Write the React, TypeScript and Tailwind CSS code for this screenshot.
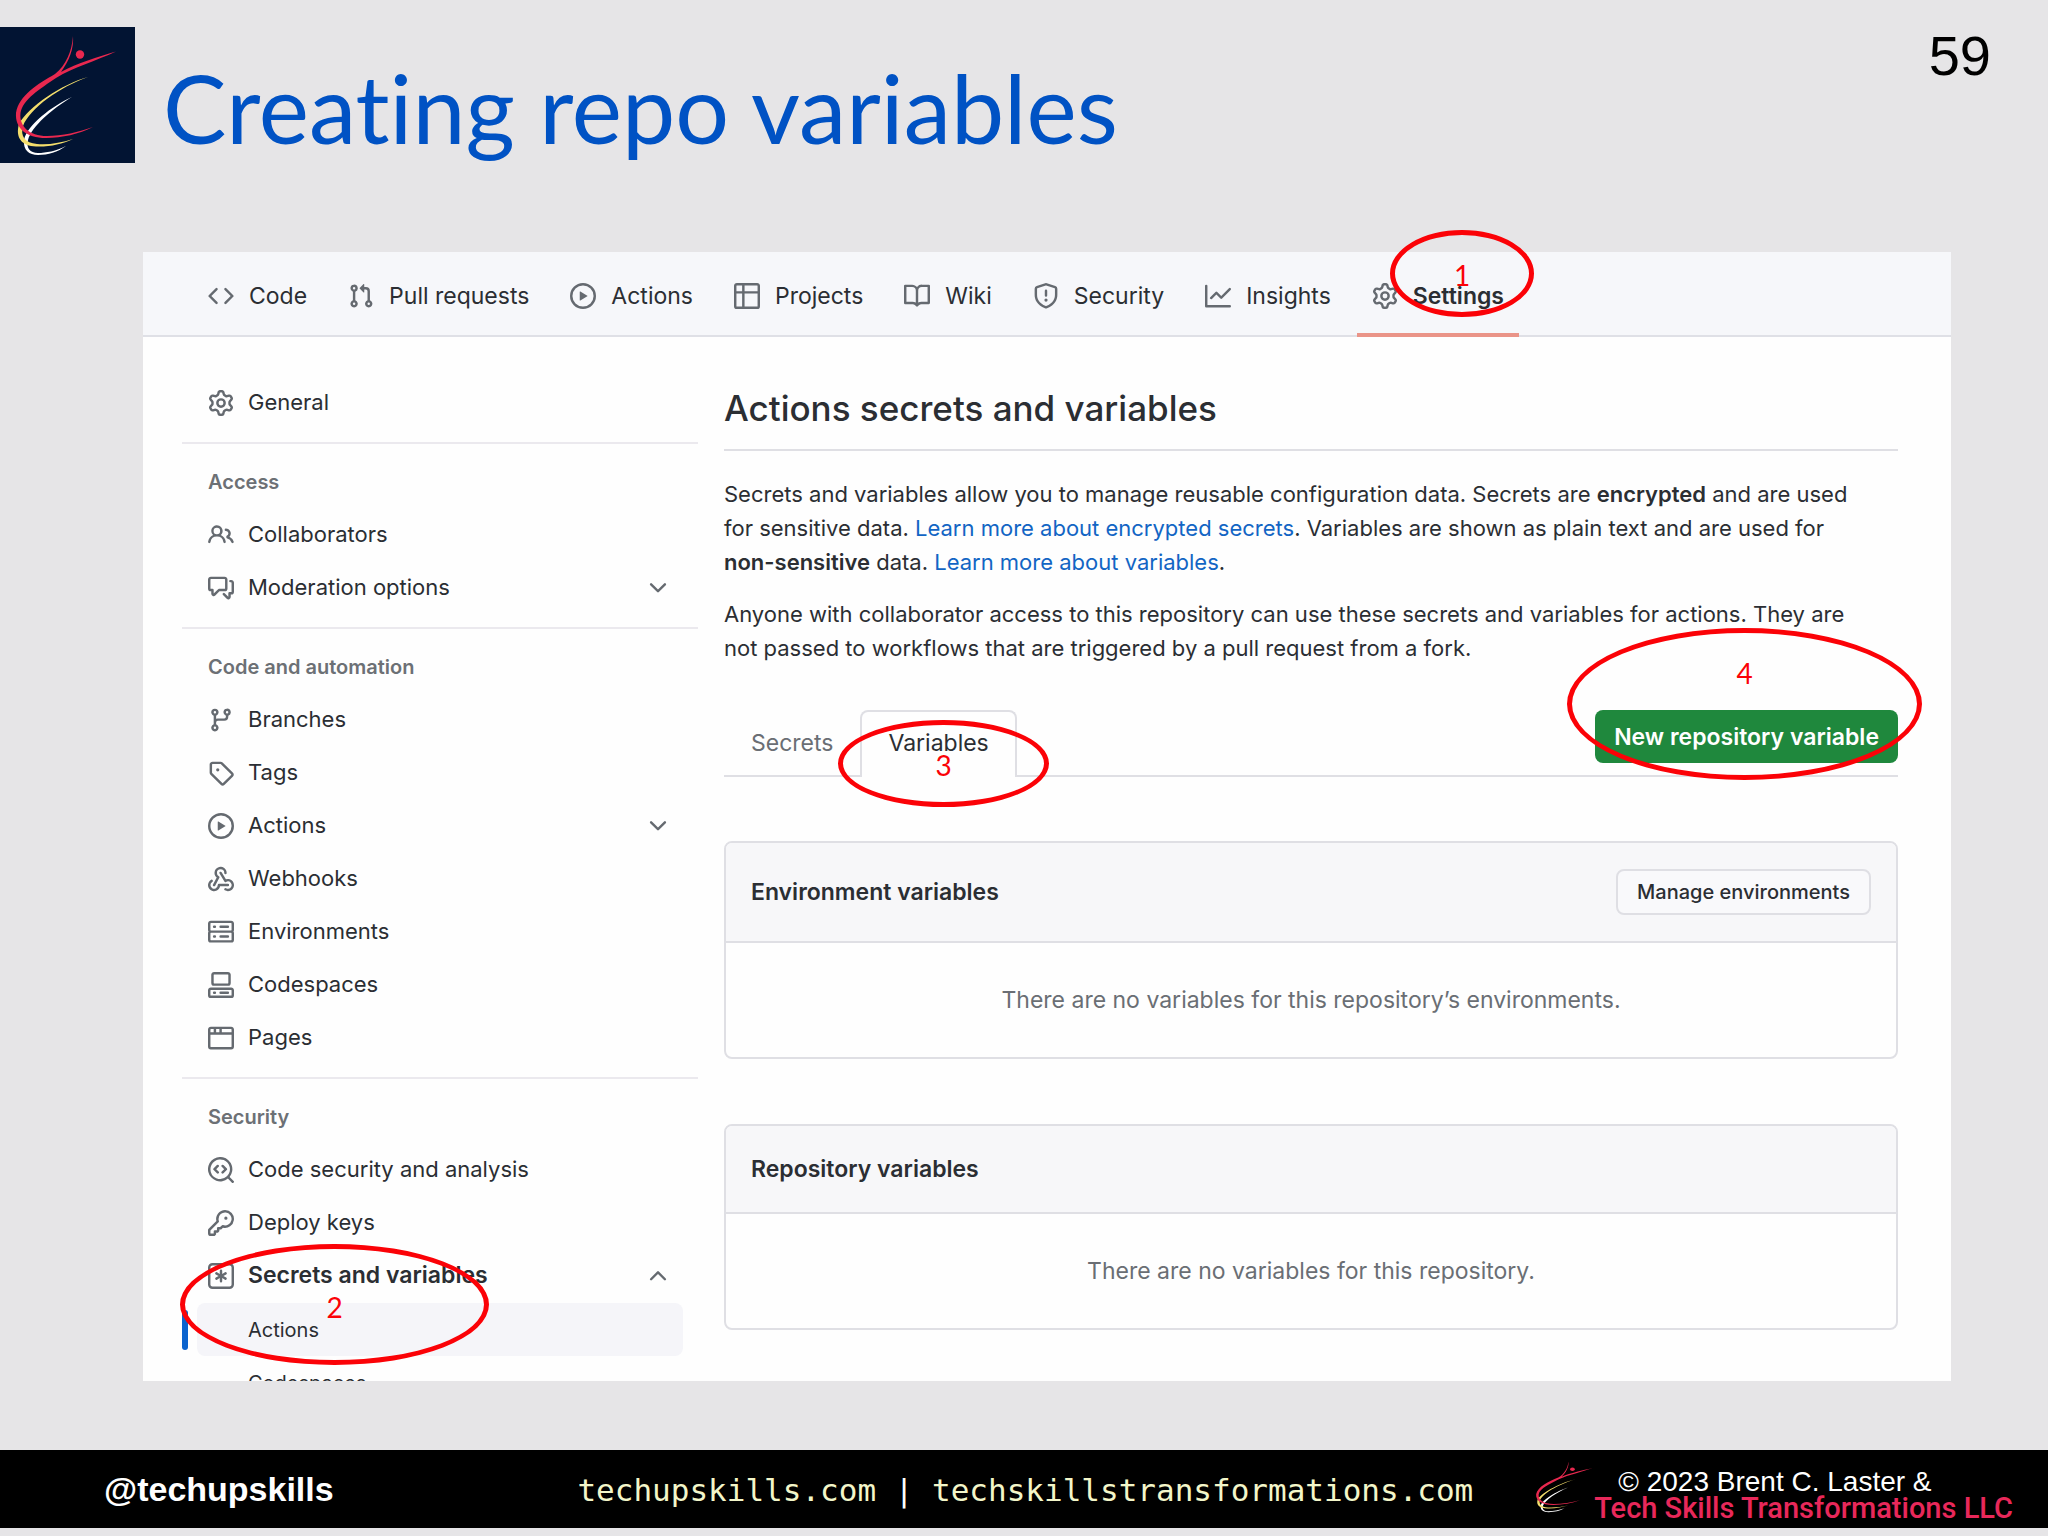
import React from "react";

// 16px icon outlines
const ICONS = {
    code: "m11.28 3.22 4.25 4.25a.75.75 0 0 1 0 1.06l-4.25 4.25a.749.749 0 0 1-1.275-.326.749.749 0 0 1 .215-.734L13.94 8l-3.72-3.72a.749.749 0 0 1 .326-1.275.749.749 0 0 1 .734.215Zm-6.56 0a.751.751 0 0 1 1.042.018.751.751 0 0 1 .018 1.042L2.06 8l3.72 3.72a.749.749 0 0 1-.326 1.275.749.749 0 0 1-.734-.215L.47 8.53a.75.75 0 0 1 0-1.06Z",
    pull: "M1.5 3.25a2.25 2.25 0 1 1 3 2.122v5.256a2.251 2.251 0 1 1-1.5 0V5.372A2.25 2.25 0 0 1 1.5 3.25Zm5.677-.177L9.573.677A.25.25 0 0 1 10 .854V2.5h1A2.5 2.5 0 0 1 13.5 5v5.628a2.251 2.251 0 1 1-1.5 0V5a1 1 0 0 0-1-1h-1v1.646a.25.25 0 0 1-.427.177L7.177 3.427a.25.25 0 0 1 0-.354ZM3.75 2.5a.75.75 0 1 0 0 1.5.75.75 0 0 0 0-1.5Zm0 9.5a.75.75 0 1 0 0 1.5.75.75 0 0 0 0-1.5Zm8.25.75a.75.75 0 1 0 1.5 0 .75.75 0 0 0-1.5 0Z",
    play: "M8 0a8 8 0 1 1 0 16A8 8 0 0 1 8 0ZM1.5 8a6.5 6.5 0 1 0 13 0 6.5 6.5 0 0 0-13 0Zm4.879-2.773 4.264 2.559a.25.25 0 0 1 0 .428l-4.264 2.559A.25.25 0 0 1 6 10.559V5.442a.25.25 0 0 1 .379-.215Z",
    table: "M0 1.75C0 .784.784 0 1.75 0h12.5C15.216 0 16 .784 16 1.75v12.5A1.75 1.75 0 0 1 14.25 16H1.75A1.75 1.75 0 0 1 0 14.25ZM6.5 6.5v8h7.75a.25.25 0 0 0 .25-.25V6.5Zm8-1.5V1.75a.25.25 0 0 0-.25-.25H6.5V5Zm-13 1.5v7.75c0 .138.112.25.25.25H5v-8ZM5 5V1.5H1.75a.25.25 0 0 0-.25.25V5Z",
    book: "M0 1.75A.75.75 0 0 1 .75 1h4.253c1.227 0 2.317.59 3 1.501A3.743 3.743 0 0 1 11.006 1h4.245a.75.75 0 0 1 .75.75v10.5a.75.75 0 0 1-.75.75h-4.507a2.25 2.25 0 0 0-1.591.659l-.622.621a.75.75 0 0 1-1.06 0l-.622-.621A2.25 2.25 0 0 0 5.258 13H.75a.75.75 0 0 1-.75-.75Zm7.251 10.324.004-5.073-.002-2.253A2.25 2.25 0 0 0 5.003 2.5H1.5v9h3.757a3.75 3.75 0 0 1 1.994.574ZM8.755 4.75l-.004 7.322a3.752 3.752 0 0 1 1.992-.572H14.5v-9h-3.495a2.25 2.25 0 0 0-2.25 2.25Z",
    shield: "M7.467.133a1.748 1.748 0 0 1 1.066 0l5.25 1.68A1.75 1.75 0 0 1 15 3.48V7c0 1.566-.32 3.182-1.303 4.682-.983 1.498-2.585 2.813-5.032 3.855a1.697 1.697 0 0 1-1.33 0c-2.447-1.042-4.049-2.357-5.032-3.855C1.32 10.182 1 8.566 1 7V3.48a1.75 1.75 0 0 1 1.217-1.667Zm.61 1.429a.25.25 0 0 0-.153 0l-5.25 1.68a.25.25 0 0 0-.174.238V7c0 1.358.275 2.666 1.057 3.86.784 1.194 2.121 2.34 4.366 3.297a.196.196 0 0 0 .154 0c2.245-.956 3.582-2.104 4.366-3.298C13.225 9.666 13.5 8.36 13.5 7V3.48a.251.251 0 0 0-.174-.237l-5.25-1.68ZM8.75 4.75v3a.75.75 0 0 1-1.5 0v-3a.75.75 0 0 1 1.5 0ZM9 10.5a1 1 0 1 1-2 0 1 1 0 0 1 2 0Z",
    graph: "M1.5 1.75V13.5h13.75a.75.75 0 0 1 0 1.5H.75a.75.75 0 0 1-.75-.75V1.75a.75.75 0 0 1 1.5 0Zm14.28 2.53-5.25 5.25a.75.75 0 0 1-1.06 0L7 7.06 4.28 9.78a.751.751 0 0 1-1.042-.018.751.751 0 0 1-.018-1.042l3.25-3.25a.75.75 0 0 1 1.06 0L10 7.94l4.72-4.72a.751.751 0 0 1 1.042.018.751.751 0 0 1 .018 1.042Z",
    gear: "M8 0a8.2 8.2 0 0 1 .701.031C9.444.095 9.99.645 10.16 1.29l.288 1.107c.018.066.079.158.212.224.231.114.454.243.668.386.123.082.233.09.299.071l1.103-.303c.644-.176 1.392.021 1.82.63.27.385.506.792.704 1.218.315.675.111 1.422-.364 1.891l-.814.806c-.049.048-.098.147-.088.294.016.257.016.515 0 .772-.01.147.038.246.088.294l.814.806c.475.469.679 1.216.364 1.891a7.977 7.977 0 0 1-.704 1.217c-.428.61-1.176.807-1.82.63l-1.102-.302c-.067-.019-.177-.011-.3.071a5.909 5.909 0 0 1-.668.386c-.133.066-.194.158-.211.224l-.29 1.106c-.168.646-.715 1.196-1.458 1.26a8.006 8.006 0 0 1-1.402 0c-.743-.064-1.289-.614-1.458-1.26l-.289-1.106c-.018-.066-.079-.158-.212-.224a5.738 5.738 0 0 1-.668-.386c-.123-.082-.233-.09-.299-.071l-1.103.303c-.644.176-1.392-.021-1.82-.63a8.12 8.12 0 0 1-.704-1.218c-.315-.675-.111-1.422.363-1.891l.815-.806c.05-.048.098-.147.088-.294a6.214 6.214 0 0 1 0-.772c.01-.147-.038-.246-.088-.294l-.815-.806C.635 6.045.431 5.298.746 4.623a7.92 7.92 0 0 1 .704-1.217c.428-.61 1.176-.807 1.82-.63l1.102.302c.067.019.177.011.3-.071.214-.143.437-.272.668-.386.133-.066.194-.158.211-.224l.29-1.106C6.009.645 6.556.095 7.299.03 7.53.01 7.764 0 8 0Zm-.571 1.525c-.036.003-.108.036-.137.146l-.289 1.105c-.147.561-.549.967-.998 1.189-.173.086-.34.183-.5.29-.417.278-.97.423-1.529.27l-1.103-.303c-.109-.03-.175.016-.195.045-.22.312-.412.644-.573.99-.014.031-.021.11.059.19l.815.806c.411.406.562.957.53 1.456a4.709 4.709 0 0 0 0 .582c.032.499-.119 1.05-.53 1.456l-.815.806c-.081.08-.073.159-.059.19.162.346.353.677.573.989.02.03.085.076.195.046l1.102-.303c.56-.153 1.113-.008 1.53.27.161.107.328.204.501.29.447.222.85.629.997 1.189l.289 1.105c.029.109.101.143.137.146a6.6 6.6 0 0 0 1.142 0c.036-.003.108-.036.137-.146l.289-1.105c.147-.561.549-.967.998-1.189.173-.086.34-.183.5-.29.417-.278.97-.423 1.529-.27l1.103.303c.109.029.175-.016.195-.045.22-.313.411-.644.573-.99.014-.031.021-.11-.059-.19l-.815-.806c-.411-.406-.562-.957-.53-1.456a4.709 4.709 0 0 0 0-.582c-.032-.499.119-1.05.53-1.456l.815-.806c.081-.08.073-.159.059-.19a6.464 6.464 0 0 0-.573-.989c-.02-.03-.085-.076-.195-.046l-1.102.303c-.56.153-1.113.008-1.53-.27a4.44 4.44 0 0 0-.501-.29c-.447-.222-.85-.629-.997-1.189l-.289-1.105c-.029-.11-.101-.143-.137-.146a6.6 6.6 0 0 0-1.142 0ZM11 8a3 3 0 1 1-6 0 3 3 0 0 1 6 0ZM9.5 8a1.5 1.5 0 1 0-3.001.001A1.5 1.5 0 0 0 9.5 8Z",
    people: "M2 5.5a3.5 3.5 0 1 1 5.898 2.549 5.508 5.508 0 0 1 3.034 4.084.75.75 0 1 1-1.482.235 4 4 0 0 0-7.9 0 .75.75 0 0 1-1.482-.236A5.507 5.507 0 0 1 3.102 8.05 3.493 3.493 0 0 1 2 5.5ZM11 4a3.001 3.001 0 0 1 2.22 5.018 5.01 5.01 0 0 1 2.56 3.012.749.749 0 0 1-.885.954.752.752 0 0 1-.549-.514 3.507 3.507 0 0 0-2.522-2.372.75.75 0 0 1-.574-.73v-.352a.75.75 0 0 1 .416-.672A1.5 1.5 0 0 0 11 5.5.75.75 0 0 1 11 4Zm-5.5-.5a2 2 0 1 0-.001 3.999A2 2 0 0 0 5.5 3.5Z",
    discussion: "M1.75 1h8.5c.966 0 1.75.784 1.75 1.75v5.5A1.75 1.75 0 0 1 10.25 10H7.061l-2.574 2.573A1.458 1.458 0 0 1 2 11.543V10h-.25A1.75 1.75 0 0 1 0 8.25v-5.5C0 1.784.784 1 1.75 1ZM1.5 2.75v5.5c0 .138.112.25.25.25h1a.75.75 0 0 1 .75.75v2.19l2.72-2.72a.749.749 0 0 1 .53-.22h3.5a.25.25 0 0 0 .25-.25v-5.5a.25.25 0 0 0-.25-.25h-8.5a.25.25 0 0 0-.25.25Zm13 2a.25.25 0 0 0-.25-.25h-.5a.75.75 0 0 1 0-1.5h.5c.966 0 1.75.784 1.75 1.75v5.5A1.75 1.75 0 0 1 14.25 12H14v1.543a1.458 1.458 0 0 1-2.487 1.03L9.22 12.28a.749.749 0 0 1 .326-1.275.749.749 0 0 1 .734.215l2.22 2.22v-2.19a.75.75 0 0 1 .75-.75h1a.25.25 0 0 0 .25-.25Z",
    branch: "M9.5 3.25a2.25 2.25 0 1 1 3 2.122V6A2.5 2.5 0 0 1 10 8.5H6a1 1 0 0 0-1 1v1.128a2.251 2.251 0 1 1-1.5 0V5.372a2.25 2.25 0 1 1 1.5 0v1.836A2.493 2.493 0 0 1 6 7h4a1 1 0 0 0 1-1v-.628A2.25 2.25 0 0 1 9.5 3.25Zm-6 0a.75.75 0 1 0 1.5 0 .75.75 0 0 0-1.5 0Zm8.25-.75a.75.75 0 1 0 0 1.5.75.75 0 0 0 0-1.5ZM4.25 12a.75.75 0 1 0 0 1.5.75.75 0 0 0 0-1.5Z",
    tag: "M1 7.775V2.75C1 1.784 1.784 1 2.75 1h5.025c.464 0 .91.184 1.238.513l6.25 6.25a1.75 1.75 0 0 1 0 2.474l-5.026 5.026a1.75 1.75 0 0 1-2.474 0l-6.25-6.25A1.752 1.752 0 0 1 1 7.775Zm1.5 0c0 .066.026.13.073.177l6.25 6.25a.25.25 0 0 0 .354 0l5.025-5.025a.25.25 0 0 0 0-.354l-6.25-6.25a.25.25 0 0 0-.177-.073H2.75a.25.25 0 0 0-.25.25ZM6 5a1 1 0 1 1 0 2 1 1 0 0 1 0-2Z",
    webhook: "M5.5 4.25a2.25 2.25 0 0 1 4.5 0 .75.75 0 0 0 1.5 0 3.75 3.75 0 1 0-6.14 2.889l-2.272 4.258a.75.75 0 0 0 1.324.706L7 7.25a.75.75 0 0 0-.309-1.015A2.25 2.25 0 0 1 5.5 4.25Z M7.364 3.607a.75.75 0 0 1 1.03.257l2.608 4.349a3.75 3.75 0 1 1-.628 6.785.75.75 0 0 1 .752-1.299 2.25 2.25 0 1 0-.033-3.88.75.75 0 0 1-1.03-.256L7.107 4.636a.75.75 0 0 1 .257-1.03Z M2.9 8.776A.75.75 0 0 1 2.625 9.8 2.25 2.25 0 1 0 6 11.75a.75.75 0 0 1 .75-.751h5.5a.75.75 0 0 1 0 1.5H7.425a3.751 3.751 0 1 1-5.55-3.998.75.75 0 0 1 1.024.274Z",
    server: "M1.75 1h12.5c.966 0 1.75.784 1.75 1.75v4c0 .372-.116.717-.314 1 .198.283.314.628.314 1v4a1.75 1.75 0 0 1-1.75 1.75H1.75A1.75 1.75 0 0 1 0 12.75v-4c0-.358.109-.707.314-1a1.739 1.739 0 0 1-.314-1v-4C0 1.784.784 1 1.75 1ZM1.5 2.75v4c0 .138.112.25.25.25h12.5a.25.25 0 0 0 .25-.25v-4a.25.25 0 0 0-.25-.25H1.75a.25.25 0 0 0-.25.25Zm.25 5.75a.25.25 0 0 0-.25.25v4c0 .138.112.25.25.25h12.5a.25.25 0 0 0 .25-.25v-4a.25.25 0 0 0-.25-.25ZM7 4.75A.75.75 0 0 1 7.75 4h4.5a.75.75 0 0 1 0 1.5h-4.5A.75.75 0 0 1 7 4.75ZM7.75 10h4.5a.75.75 0 0 1 0 1.5h-4.5a.75.75 0 0 1 0-1.5ZM3 4.75A.75.75 0 0 1 3.75 4h.5a.75.75 0 0 1 0 1.5h-.5A.75.75 0 0 1 3 4.75ZM3.75 10h.5a.75.75 0 0 1 0 1.5h-.5a.75.75 0 0 1 0-1.5Z",
    codespaces: "M0 11.25c0-.966.784-1.75 1.75-1.75h12.5c.966 0 1.75.784 1.75 1.75v3A1.75 1.75 0 0 1 14.25 16H1.75A1.75 1.75 0 0 1 0 14.25Zm2-9.5C2 .784 2.784 0 3.75 0h8.5C13.216 0 14 .784 14 1.75v5a1.75 1.75 0 0 1-1.75 1.75h-8.5A1.75 1.75 0 0 1 2 6.75Zm1.75-.25a.25.25 0 0 0-.25.25v5c0 .138.112.25.25.25h8.5a.25.25 0 0 0 .25-.25v-5a.25.25 0 0 0-.25-.25Zm-2 9.5a.25.25 0 0 0-.25.25v3c0 .138.112.25.25.25h12.5a.25.25 0 0 0 .25-.25v-3a.25.25 0 0 0-.25-.25ZM7 12.75a.75.75 0 0 1 .75-.75h4.5a.75.75 0 0 1 0 1.5h-4.5a.75.75 0 0 1-.75-.75Zm-4 0a.75.75 0 0 1 .75-.75h.5a.75.75 0 0 1 0 1.5h-.5a.75.75 0 0 1-.75-.75Z",
    browser: "M0 2.75C0 1.784.784 1 1.75 1h12.5c.966 0 1.75.784 1.75 1.75v10.5A1.75 1.75 0 0 1 14.25 15H1.75A1.75 1.75 0 0 1 0 13.25ZM14.5 6h-13v7.25c0 .138.112.25.25.25h12.5a.25.25 0 0 0 .25-.25Zm-6-3.5v2h6V2.75a.25.25 0 0 0-.25-.25ZM5 2.5v2h2v-2Zm-3.25 0a.25.25 0 0 0-.25.25V4.5h2v-2Z",
    codescan: "M8.47 4.97a.75.75 0 0 0 0 1.06L9.94 7.5 8.47 8.97a.75.75 0 1 0 1.06 1.06l2-2a.75.75 0 0 0 0-1.06l-2-2a.75.75 0 0 0-1.06 0ZM6.53 6.03a.75.75 0 0 0-1.06-1.06l-2 2a.75.75 0 0 0 0 1.06l2 2a.75.75 0 1 0 1.06-1.06L5.06 7.5l1.47-1.47Z M12.246 13.307a7.501 7.501 0 1 1 1.06-1.06l2.474 2.473a.749.749 0 0 1-.326 1.275.749.749 0 0 1-.734-.215ZM1.5 7.5a6.002 6.002 0 0 0 3.608 5.504 6.002 6.002 0 0 0 6.486-1.117.748.748 0 0 1 .292-.293A6 6 0 1 0 1.5 7.5Z",
    key: "M10.5 0a5.499 5.499 0 1 1-1.288 10.848l-.932.932a.749.749 0 0 1-.53.22H7v.75a.749.749 0 0 1-.22.53l-.5.5a.749.749 0 0 1-.53.22H5v.75a.749.749 0 0 1-.22.53l-.5.5a.749.749 0 0 1-.53.22h-2A1.75 1.75 0 0 1 0 14.25v-2c0-.199.079-.389.22-.53l4.932-4.932A5.5 5.5 0 0 1 10.5 0Zm-4 5.5c-.001.431.069.86.205 1.269a.75.75 0 0 1-.181.768L1.5 12.56v1.69c0 .138.112.25.25.25h1.69l.06-.06v-1.19a.75.75 0 0 1 .75-.75h1.19l.06-.06v-1.19a.75.75 0 0 1 .75-.75h1.19l1.023-1.025a.75.75 0 0 1 .768-.18A4 4 0 1 0 6.5 5.5ZM11 6a1 1 0 1 1 0-2 1 1 0 0 1 0 2Z",
    asterisk: "M0 2.75A2.75 2.75 0 0 1 2.75 0h10.5A2.75 2.75 0 0 1 16 2.75v10.5A2.75 2.75 0 0 1 13.25 16H2.75A2.75 2.75 0 0 1 0 13.25ZM2.75 1.5c-.69 0-1.25.56-1.25 1.25v10.5c0 .69.56 1.25 1.25 1.25h10.5c.69 0 1.25-.56 1.25-1.25V2.75c0-.69-.56-1.25-1.25-1.25ZM8 4a.75.75 0 0 1 .75.75V6.7l1.69-.975a.75.75 0 0 1 .75 1.3L9.5 8l1.69.976a.75.75 0 0 1-.75 1.298L8.75 9.3v1.951a.75.75 0 0 1-1.5 0V9.299l-1.69.976a.75.75 0 0 1-.75-1.3L6.5 8l-1.69-.975a.75.75 0 0 1 .75-1.3l1.69.976V4.75A.75.75 0 0 1 8 4Z",
    down: "M12.78 5.22a.749.749 0 0 1 0 1.06l-4.25 4.25a.749.749 0 0 1-1.06 0L3.22 6.28a.749.749 0 1 1 1.06-1.06L8 8.939l3.72-3.719a.749.749 0 0 1 1.06 0Z",
    up: "M3.22 10.53a.749.749 0 0 1 0-1.06l4.25-4.25a.749.749 0 0 1 1.06 0l4.25 4.25a.749.749 0 1 1-1.06 1.06L8 6.811 4.28 10.53a.749.749 0 0 1-1.06 0Z",
};

type IconName = keyof typeof ICONS;

function Icon({ name }: { name: IconName }) {
    return (
        <svg viewBox="0 0 16 16" fill="currentColor" className="w-[26px] h-[26px] shrink-0 text-[#656a70]" aria-hidden="true">
            <path fillRule="evenodd" d={ICONS[name]} />
        </svg>
    );
}

function Logo({ className, viewBox }: { className: string; viewBox: string }) {
    return (
        <svg viewBox={viewBox} preserveAspectRatio="none" className={className} aria-hidden="true">
            <path fill="#fff" d="M72 70C52 79 27 98 24 113C23 123 29 128 38 128C48 128 58 125 66 119C56 124 46 126 38 126C30 126 26 121 28 113C32 99 52 82 72 70Z" />
            <path fill="#f4de6c" d="M88 50C62 57 28 80 19 97C15 111 22 119 36 119.500C50 120 62 117 73 112C61 116 48 118 37 117C25 116 20 109 23 99C30 81 60 60 88 50Z" />
            <path fill="#e8284f" d="M73 9C72 24 66 38 55 47C38 57 19 68 16 86C15 101 26 111 46 111C62 111 79 107 93 100C79 105 62 109 47 109C29 109 19 99 20.500 86C23 72 40 62 56 51C74 40 96 34 116 24.500C98 30 77 36 61 45C69 34 74 22 73 9Z" />
            <circle cx="80" cy="27.500" r="4.200" fill="#e8284f" />
        </svg>
    );
}

const tabs: Array<{ label: string; icon: IconName }> = [
    { label: "Code", icon: "code" },
    { label: "Pull requests", icon: "pull" },
    { label: "Actions", icon: "play" },
    { label: "Projects", icon: "table" },
    { label: "Wiki", icon: "book" },
    { label: "Security", icon: "shield" },
    { label: "Insights", icon: "graph" },
    { label: "Settings", icon: "gear" },
];

type Item = { label: string; icon: IconName; chevron?: "down" | "up" };

const groups: Array<{ title?: string; items: Item[] }> = [
    { items: [{ label: "General", icon: "gear" }] },
    {
        title: "Access",
        items: [
            { label: "Collaborators", icon: "people" },
            { label: "Moderation options", icon: "discussion", chevron: "down" },
        ],
    },
    {
        title: "Code and automation",
        items: [
            { label: "Branches", icon: "branch" },
            { label: "Tags", icon: "tag" },
            { label: "Actions", icon: "play", chevron: "down" },
            { label: "Webhooks", icon: "webhook" },
            { label: "Environments", icon: "server" },
            { label: "Codespaces", icon: "codespaces" },
            { label: "Pages", icon: "browser" },
        ],
    },
    {
        title: "Security",
        items: [
            { label: "Code security and analysis", icon: "codescan" },
            { label: "Deploy keys", icon: "key" },
            { label: "Secrets and variables", icon: "asterisk", chevron: "up" },
        ],
    },
];

function Sidebar() {
    return (
        <aside className="w-[516px] shrink-0">
            {groups.map((group, i) => (
                <section key={i} className={i > 0 ? "mt-[13px] border-t-2 border-[#ebe9ee] pt-[14px]" : ""}>
                    {group.title && (
                        <h2 className="h-[50px] flex items-center pl-[26px] pb-[2px] text-[20px] font-semibold text-[#6c7075]">{group.title}</h2>
                    )}
                    <ul>
                        {group.items.map((item) => (
                            <li key={item.label}>
                                <a href="#" className="h-[53px] flex items-center gap-[14px] pl-[26px] pr-[27px]">
                                    <Icon name={item.icon} />
                                    <span className={item.chevron === "up" ? "flex-1 pb-[2px] text-[23px] font-semibold" : "flex-1 pb-[2px] text-[22px]"}>{item.label}</span>
                                    {item.chevron && <Icon name={item.chevron} />}
                                </a>
                            </li>
                        ))}
                    </ul>
                </section>
            ))}
            <ul className="mt-px mr-[15px] text-[20px]">
                <li className="flex items-center gap-[9px]">
                    <span className="w-[6px] h-10 rounded-full bg-[#0b63ce]" />
                    <a href="#" className="h-[53px] flex-1 flex items-center rounded-lg bg-[#f5f5f9] pl-[51px]">Actions</a>
                </li>
                <li>
                    <a href="#" className="h-[53px] flex items-center pl-[66px]">Codespaces</a>
                </li>
            </ul>
        </aside>
    );
}

function Box({ title, action, children }: { title: string; action?: React.ReactNode; children: React.ReactNode }) {
    return (
        <section className="border-2 border-[#dfdfe4] rounded-lg overflow-hidden">
            <header className={`${action ? "h-[100px]" : "h-[88px]"} flex items-center justify-between px-[25px] bg-[#f7f7f9] border-b-2 border-[#dfdfe4]`}>
                <h3 className="font-semibold">{title}</h3>
                {action}
            </header>
            <p className="h-[114px] flex items-center justify-center text-[#6a6e74]">{children}</p>
        </section>
    );
}

function Callout({ className, children }: { className: string; children: React.ReactNode }) {
    return (
        <div className={`absolute flex justify-center rounded-[50%] border-[5px] border-[#fb0207] text-[#fb0207] font-[Lato,sans-serif] text-[28px] leading-[28px] pointer-events-none ${className}`}>
            {children}
        </div>
    );
}

export default function App() {
    return (
        <div className="h-screen flex flex-col bg-[#e6e5e7] pb-2">
            <header className="flex items-start pt-[27px] pr-[57px]">
                <div className="w-[135px] h-[136px] bg-[#021433]">
                    <Logo className="w-full h-full" viewBox="0 0 135 136" />
                </div>
                <h1 className="flex-1 pl-[28px] pt-[27px] font-[Lato,sans-serif] text-[95px] leading-[106px] text-[#0052c4] [font-variant-ligatures:none]">Creating repo variables</h1>
                <span className="font-['Liberation_Sans',sans-serif] text-[56px] leading-[58px] text-black">59</span>
            </header>

            <div className="relative flex-1 min-h-0 mt-[89px] mb-[69px] ml-[143px] mr-[97px] font-[Inter,sans-serif] text-[23px] leading-[34px] text-[#2b2e33]">
                <div className="h-full overflow-hidden bg-[#fefefe]">
                    <nav className="h-[85px] flex items-stretch bg-[#f6f7fa] border-b-2 border-[#dfe0e6] pl-[50px]">
                        {tabs.map((tab) => (
                            <a
                                key={tab.label}
                                href="#"
                                className={`flex items-center gap-[15px] pt-[7px] px-[15px] mr-[11px] -mb-[2px] border-b-4 ${tab.label === "Settings" ? "border-[#ea9488] font-semibold" : "border-transparent"}`}
                            >
                                <Icon name={tab.icon} />
                                {tab.label}
                            </a>
                        ))}
                    </nav>

                    <div className="flex gap-[26px] pt-[39px] pl-[39px] pr-[53px]">
                        <Sidebar />

                        <main className="flex-1 min-w-0">
                            <h2 className="h-[75px] pt-[8px] border-b-2 border-[#dfdfe4] text-[35px] leading-[48px] font-medium">Actions secrets and variables</h2>
                            <div className="mt-[26px] pr-6 text-[22px] space-y-[18px]">
                                <p>
                                    Secrets and variables allow you to manage reusable configuration data. Secrets are <b className="font-semibold">encrypted</b> and are used
                                    for sensitive data. <a href="#" className="text-[#1265c4]">Learn more about encrypted secrets</a>. Variables are shown as plain text and are used for{" "}
                                    <b className="font-semibold">non-sensitive</b> data. <a href="#" className="text-[#1265c4]">Learn more about variables</a>.
                                </p>
                                <p>
                                    Anyone with collaborator access to this repository can use these secrets and variables for actions. They are not passed to
                                    workflows that are triggered by a pull request from a fork.
                                </p>
                            </div>

                            <div className="mt-[45px] h-[67px] flex items-start border-b-2 border-[#dfdfe4]">
                                <button className="h-[65px] px-[27px] text-[#6a6e74]">Secrets</button>
                                <button className="h-[67px] px-[26px] pb-1 bg-[#fefefe] border-2 border-b-0 border-[#dfdfe4] rounded-t-lg">Variables</button>
                                <button className="ml-auto h-[53px] px-[19px] rounded-lg bg-[#1f883d] text-white font-semibold">New repository variable</button>
                            </div>

                            <div className="mt-[64px] space-y-[65px]">
                                <Box
                                    title="Environment variables"
                                    action={
                                        <button className="h-[46px] px-[19px] border-2 border-[#dfdfe4] rounded-lg bg-[#f9f9fb] text-[20px] font-medium">Manage environments</button>
                                    }
                                >
                                    There are no variables for this repository’s environments.
                                </Box>
                                <Box title="Repository variables">There are no variables for this repository.</Box>
                            </div>
                        </main>
                    </div>
                </div>

                {/* Numbered steps */}
                <Callout className="left-[1247px] top-[-22px] w-[144px] h-[87px] pt-[26px]">1</Callout>
                <Callout className="left-[37px] top-[992px] w-[309px] h-[121px] pt-[44px]">2</Callout>
                <Callout className="left-[695px] top-[468px] w-[211px] h-[87px] pt-[26px]">3</Callout>
                <Callout className="left-[1424px] top-[376px] w-[355px] h-[152px] pt-[26px]">4</Callout>
            </div>

            <footer className="h-[78px] shrink-0 flex items-center bg-black pl-[104px] pr-[35px] whitespace-nowrap">
                <span className="font-['Liberation_Sans',sans-serif] font-bold text-[34px] text-white">@techupskills</span>
                <p className="flex-1 pr-[62px] pt-[2px] text-right font-['DejaVu_Sans_Mono',monospace] text-[31px] text-[#f3f6c9]">
                    techupskills.com <span className="text-white">|</span> techskillstransformations.com
                </p>
                <Logo className="w-[59px] h-[52px] mb-1" viewBox="14 8 104 122" />
                <div className="pt-3">
                    <p className="pl-6 font-['Liberation_Sans',sans-serif] text-[28px] leading-[26px] text-white">© 2023 Brent C. Laster &amp;</p>
                    <p className="font-[Roboto,sans-serif] font-medium text-[29px] leading-[26px] text-[#e8285a]">Tech Skills Transformations LLC</p>
                </div>
            </footer>
        </div>
    );
}
